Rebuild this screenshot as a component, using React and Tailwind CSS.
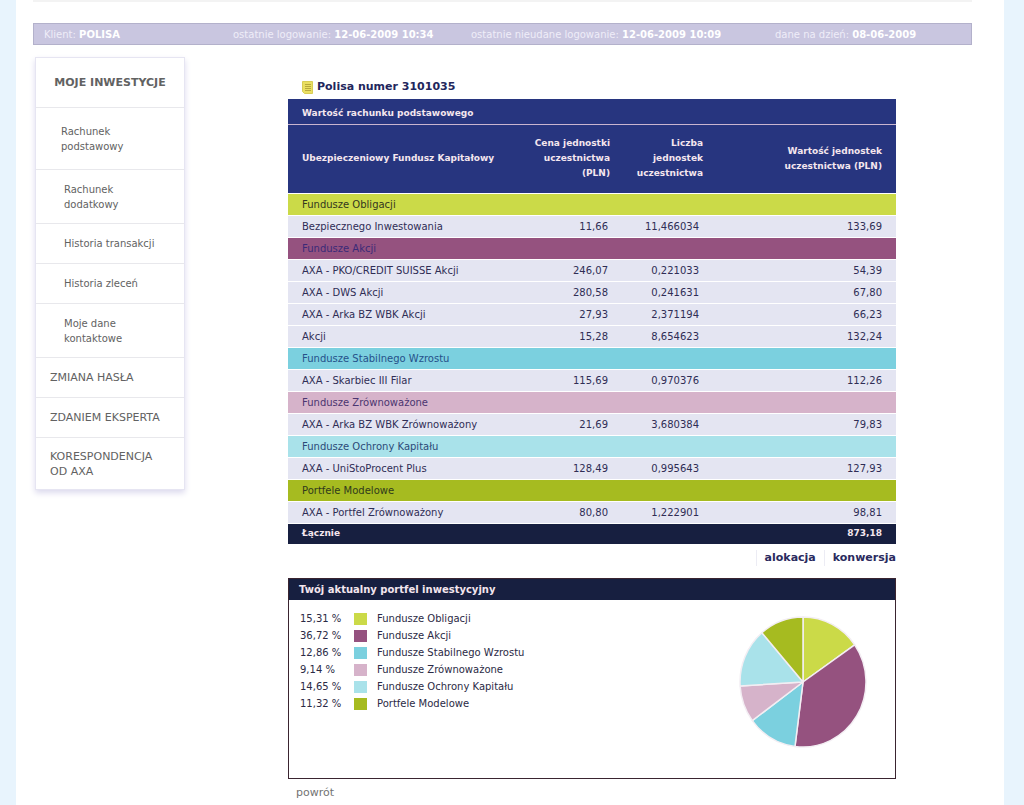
const funds = [
  {
    name: "Fundusze Obligacji",
    share: 15.31,
    fill: "#cbda48",
    rowClass: "bg-[#cbda48] text-[#33371f]",
    swatchClass: "bg-[#cbda48]",
    items: [["Bezpiecznego Inwestowania", "11,66", "11,466034", "133,69"]],
  },
  {
    name: "Fundusze Akcji",
    share: 36.72,
    fill: "#95527f",
    rowClass: "bg-[#95527f] text-[#3b2a78]",
    swatchClass: "bg-[#95527f]",
    items: [
      ["AXA - PKO/CREDIT SUISSE Akcji", "246,07", "0,221033", "54,39"],
      ["AXA - DWS Akcji", "280,58", "0,241631", "67,80"],
      ["AXA - Arka BZ WBK Akcji", "27,93", "2,371194", "66,23"],
      ["Akcji", "15,28", "8,654623", "132,24"],
    ],
  },
  {
    name: "Fundusze Stabilnego Wzrostu",
    share: 12.86,
    fill: "#7bd0df",
    rowClass: "bg-[#7bd0df] text-[#26508a]",
    swatchClass: "bg-[#7bd0df]",
    items: [["AXA - Skarbiec III Filar", "115,69", "0,970376", "112,26"]],
  },
  {
    name: "Fundusze Zrównoważone",
    share: 9.14,
    fill: "#d6b3ca",
    rowClass: "bg-[#d6b3ca] text-[#4b3570]",
    swatchClass: "bg-[#d6b3ca]",
    items: [["AXA - Arka BZ WBK Zrównoważony", "21,69", "3,680384", "79,83"]],
  },
  {
    name: "Fundusze Ochrony Kapitału",
    share: 14.65,
    fill: "#a9e2ea",
    rowClass: "bg-[#a9e2ea] text-[#2c4a78]",
    swatchClass: "bg-[#a9e2ea]",
    items: [["AXA - UniStoProcent Plus", "128,49", "0,995643", "127,93"]],
  },
  {
    name: "Portfele Modelowe",
    share: 11.32,
    fill: "#a6bb20",
    rowClass: "bg-[#a6bb20] text-[#303a1c]",
    swatchClass: "bg-[#a6bb20]",
    items: [["AXA - Portfel Zrównoważony", "80,80", "1,222901", "98,81"]],
  },
];

const menu = [
  { label: "Rachunek podstawowy", className: "h-[61px] pl-[25px] pr-10 text-[10px]" },
  { label: "Rachunek dodatkowy", className: "h-[53px] pl-7 pr-10 text-[10px]" },
  { label: "Historia transakcji", className: "h-[39px] pl-7 text-[10px]" },
  { label: "Historia zleceń", className: "h-[39px] pl-7 text-[10px]" },
  { label: "Moje dane kontaktowe", className: "h-[53px] pl-7 pr-10 text-[10px]" },
  { label: "ZMIANA HASŁA", className: "h-[39px] pl-3.5 text-[11px]" },
  { label: "ZDANIEM EKSPERTA", className: "h-[39px] pl-3.5 text-[11px]" },
  { label: "KORESPONDENCJA OD AXA", className: "h-[51px] pl-3.5 pr-4 text-[11px]" },
];

function InfoBar() {
  return (
    <div className="mr-8 ml-[17px] flex h-[22px] items-center border border-[#b3b1cb] bg-[#c9c6e0] pl-2.5 text-[10px] whitespace-nowrap text-[#efedf8]">
      <span className="w-[189px]">
        Klient: <b className="text-white">POLISA</b>
      </span>
      <span className="w-[238px]">
        ostatnie logowanie: <b className="text-white">12-06-2009 10:34</b>
      </span>
      <span className="w-[304px]">
        ostatnie nieudane logowanie: <b className="text-white">12-06-2009 10:09</b>
      </span>
      <span>
        dane na dzień: <b className="text-white">08-06-2009</b>
      </span>
    </div>
  );
}

function SideMenu() {
  return (
    <nav className="w-[150px] shrink-0 border border-[#e6e5f2] bg-white leading-[15px] text-[#626262] shadow-[0_3px_6px_#dcdaee]">
      <h2 className="flex h-[50px] items-center justify-center border-b border-[#e8e8ec] text-[11px] font-bold">
        MOJE INWESTYCJE
      </h2>
      <ul className="divide-y divide-[#e8e8ec]">
        {menu.map((item) => (
          <li key={item.label}>
            <a href="#" className={`flex items-center ${item.className}`}>
              {item.label}
            </a>
          </li>
        ))}
      </ul>
    </nav>
  );
}

function NoteIcon() {
  return (
    <svg width="11" height="13" viewBox="0 0 11 13" aria-hidden="true">
      <path d="M0.5 0.5H10.5V12.5H2.5L0.5 10.5Z" fill="#eadf62" stroke="#d9cd55" />
      <path d="M3 3.5H9M3 5.5H9M3 7.5H9M3 9.5H9" stroke="#b7a83c" />
    </svg>
  );
}

function FundTable() {
  return (
    <table className="w-full table-fixed border-collapse text-[10px] leading-[15px] text-[#2f2d55]">
      <colgroup>
        <col />
        <col className="w-[93px]" />
        <col className="w-[93px]" />
        <col className="w-[179px]" />
      </colgroup>
      <thead className="bg-[#27357f] text-[#f4e6ee]">
        <tr className="h-[25px] border-b border-[#c9b5cf]">
          <th colSpan={4} className="pt-1 pl-3.5 text-left text-[9px]">
            Wartość rachunku podstawowego
          </th>
        </tr>
        <tr className="h-[69px] border-b border-white text-right text-[9px]">
          <th className="pl-3.5 text-left">Ubezpieczeniowy Fundusz Kapitałowy</th>
          <th className="pr-3.5">Cena jednostki uczestnictwa (PLN)</th>
          <th className="pr-3.5">Liczba jednostek uczestnictwa</th>
          <th className="pr-3.5 pl-12">Wartość jednostek uczestnictwa (PLN)</th>
        </tr>
      </thead>
      {funds.map((group) => (
        <tbody key={group.name}>
          <tr className={`h-[22px] border-b border-white ${group.rowClass}`}>
            <th colSpan={4} className="pl-3.5 text-left font-normal">
              {group.name}
            </th>
          </tr>
          {group.items.map(([name, price, units, value]) => (
            <tr key={name} className="h-[22px] border-b border-white bg-[#e4e5f2] text-right">
              <td className="pl-3.5 text-left">{name}</td>
              <td className="pr-4">{price}</td>
              <td className="pr-[18px]">{units}</td>
              <td className="pr-3.5">{value}</td>
            </tr>
          ))}
        </tbody>
      ))}
      <tfoot>
        <tr className="h-[21px] bg-[#171f40] text-[9px] text-[#f4e6ee]">
          <th colSpan={3} className="pl-3.5 text-left">
            Łącznie
          </th>
          <td className="pr-3.5 text-right font-bold">873,18</td>
        </tr>
      </tfoot>
    </table>
  );
}

function PieChart() {
  let total = 0;
  const point = (share) => {
    const angle = (share / 100) * 2 * Math.PI;
    return `${64 + 63 * Math.sin(angle)} ${66 - 65 * Math.cos(angle)}`;
  };

  return (
    <svg width="128" height="132" viewBox="0 0 128 132" role="img" aria-label="Portfel inwestycyjny">
      {funds.map((fund) => {
        const start = total;
        total += fund.share;
        return (
          <path
            key={fund.name}
            d={`M64 66L${point(start)}A63 65 0 0 1 ${point(total)}Z`}
            fill={fund.fill}
            stroke="#f3eef3"
            strokeWidth="1.5"
            strokeLinejoin="round"
          />
        );
      })}
    </svg>
  );
}

function Portfolio() {
  return (
    <section className="border border-[#3a2430] text-[10px] text-[#2b2a45]">
      <h2 className="flex h-[21px] items-center bg-[#171f40] pl-2.5 text-[10px] font-bold text-[#f4e6ee]">
        Twój aktualny portfel inwestycyjny
      </h2>
      <div className="flex h-[178px] items-start justify-between pr-7 pl-[11px]">
        <ul className="pt-2.5">
          {funds.map((fund) => (
            <li key={fund.name} className="flex h-[17px] items-center">
              <span className="w-[54px]">{fund.share.toFixed(2).replace(".", ",")} %</span>
              <span className={`mr-2.5 h-3 w-[13px] ${fund.swatchClass}`} />
              {fund.name}
            </li>
          ))}
        </ul>
        <div className="pt-4">
          <PieChart />
        </div>
      </div>
    </section>
  );
}

function App() {
  return (
    <div className="min-h-screen bg-[#e8f4fd] pr-5 pl-4 font-['DejaVu_Sans',Verdana,sans-serif]">
      <div className="min-h-screen bg-white">
        <div className="mr-8 mb-[21px] ml-[17px] border-b-2 border-[#f3f3f3]" />
        <InfoBar />
        <div className="mt-3 flex items-start pl-[19px]">
          <SideMenu />
          <main className="mr-[108px] ml-[103px] min-w-0 flex-1 pt-[22px]">
            <h1 className="flex h-5 items-center gap-1 pb-1 pl-3.5 text-[11px] font-bold text-[#22265c]">
              <NoteIcon />
              Polisa numer 3101035
            </h1>
            <FundTable />
            <div className="flex h-[34px] items-start justify-end pt-1.5 text-[11px] leading-4 font-bold text-[#2a2a5e]">
              <a href="#" className="border-l border-[#ececf4] px-2">
                alokacja
              </a>
              <a href="#" className="border-l border-[#ececf4] pl-2">
                konwersja
              </a>
            </div>
            <Portfolio />
            <a href="#" className="mt-1 ml-2 inline-block text-[11px] leading-4 text-[#737373]">
              powrót
            </a>
          </main>
        </div>
      </div>
    </div>
  );
}

export default App;
